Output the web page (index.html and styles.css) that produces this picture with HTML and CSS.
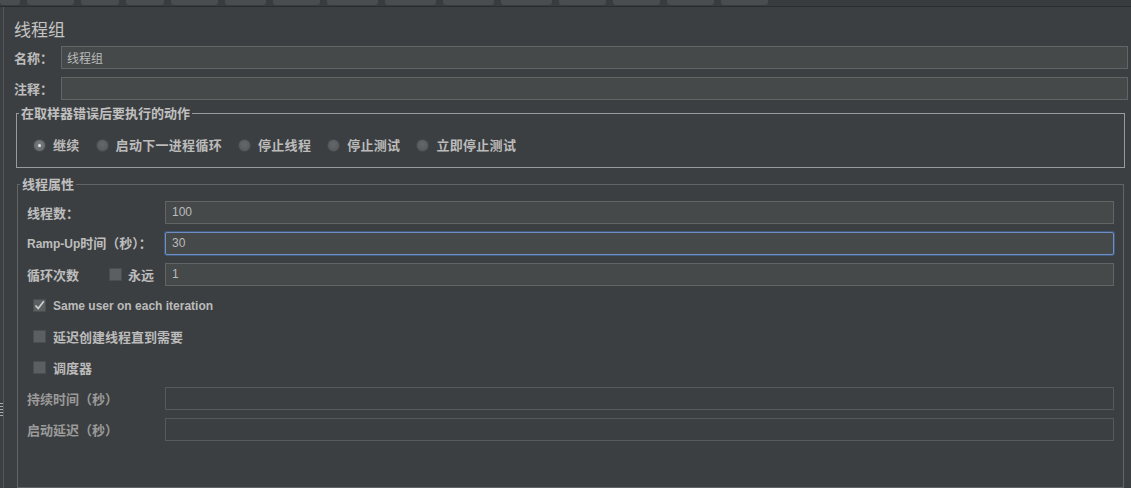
FILE: index.html
```html
<!DOCTYPE html>
<html lang="zh-CN">
<head>
<meta charset="utf-8">
<title>线程组</title>
<link rel="stylesheet" href="styles.css">
</head>
<body>
<div class="toolbar">
  <span class="tab t1"></span><span class="tab t2"></span><span class="tab t3"></span><span class="tab t3"></span><span class="tab t2"></span><span class="tab t4"></span><span class="tab t2"></span><span class="tab t5"></span><span class="tab t5"></span><span class="tab t5"></span><span class="tab t5"></span><span class="tab t2"></span><span class="tab t2"></span><span class="tab t2"></span><span class="tab t2"></span>
</div>
<div class="main">
  <div class="splitter"><div class="grip"></div></div>
  <div class="panel">
    <div class="title">线程组</div>
    <div class="fields">
      <span class="label">名称：</span><div class="input">线程组</div>
      <span class="label">注释：</span><div class="input"></div>
    </div>

    <fieldset class="group group-error">
      <legend>在取样器错误后要执行的动作</legend>
      <div class="radios">
        <span class="radio-item"><span class="radio checked"></span>继续</span>
        <span class="radio-item"><span class="radio"></span>启动下一进程循环</span>
        <span class="radio-item"><span class="radio"></span>停止线程</span>
        <span class="radio-item"><span class="radio"></span>停止测试</span>
        <span class="radio-item"><span class="radio"></span>立即停止测试</span>
      </div>
    </fieldset>

    <fieldset class="group group-thread">
      <legend>线程属性</legend>
      <div class="form">
        <span class="label">线程数：</span><div class="input num">100</div>
        <span class="label"><span class="en">Ramp-Up</span>时间（秒）：</span><div class="input num focused">30</div>
        <span class="label loop"><span>循环次数</span><span class="forever"><span class="checkbox"></span>永远</span></span><div class="input num">1</div>
        <div class="check-row"><span class="checkbox checked"><svg viewBox="0 0 13 13" width="13" height="13"><path d="M2.5 6.5 L5.2 9.5 L10.8 2.2" fill="none" stroke="#d0d0d0" stroke-width="1.7"/></svg></span><span class="en">Same user on each iteration</span></div>
        <div class="check-row"><span class="checkbox"></span>延迟创建线程直到需要</div>
        <div class="check-row"><span class="checkbox"></span>调度器</div>
        <span class="label disabled">持续时间（秒）</span><div class="input disabled-input"></div>
        <span class="label disabled">启动延迟（秒）</span><div class="input disabled-input"></div>
      </div>
    </fieldset>
  </div>
</div>
</body>
</html>
```
FILE: styles.css
```css
html, body {
  margin: 0;
  padding: 0;
  background: #3c3f41;
  height: 100%;
  overflow: hidden;
}
body {
  font-family: "Noto Sans CJK SC", "Liberation Sans", sans-serif;
  color: #bbbbbb;
  font-size: 13px;
}
.toolbar {
  display: flex;
  gap: 7px;
  height: 6px;
  border-bottom: 1px solid #2a2c2d;
  background: #393c3e;
}
.tab {
  height: 5px;
  background: #4a4d50;
  border-radius: 0 0 3px 3px;
}
.t1 { width: 20px; }
.t2 { width: 47px; }
.t3 { width: 38px; }
.t4 { width: 41px; }
.t5 { width: 51px; }

.main {
  display: flex;
  height: calc(100% - 7px);
}
.splitter {
  width: 3px;
  display: flex;
  flex-direction: column;
}
.grip {
  margin-top: 396px;
  height: 13px;
  width: 3px;
  background: repeating-linear-gradient(to bottom, #aaaaaa 0, #aaaaaa 1px, transparent 1px, transparent 3px);
}
.panel {
  flex: 1;
  border-left: 1px solid #545759;
  padding: 11px 3px 0 10px;
  display: flex;
  flex-direction: column;
}
.title {
  font-size: 17px;
  line-height: 22px;
  color: #c4c4c4;
}
.fields {
  margin-top: 6px;
  display: grid;
  grid-template-columns: 47px 1fr;
  grid-auto-rows: 23px;
  row-gap: 8px;
  align-items: center;
}
.label {
  font-weight: 700;
  line-height: 16px;
  white-space: nowrap;
  color: #bdbdbd;
}
.en {
  font-family: "Liberation Sans", sans-serif;
  font-size: 12px;
  font-weight: 700;
}
.input {
  box-sizing: border-box;
  height: 23px;
  background: #45494a;
  border: 1px solid #646464;
  padding: 0 5px;
  font-size: 12px;
  line-height: 21px;
  color: #bbbbbb;
}
.input.num {
  font-family: "Liberation Sans", sans-serif;
  padding-left: 6px;
}
.input.focused {
  border-color: #6f8fc4;
  border-radius: 2px;
  box-shadow: 0 0 0 1px #3f5a7e;
}
.input.disabled-input {
  background: #3c3f41;
  border-color: #575a5c;
}
.label.disabled {
  color: #9a9a9a;
}

.group {
  margin: 0;
  padding: 0;
  min-width: 0;
}
.group legend {
  margin-left: 2px;
  padding: 0 2px;
  font-weight: 700;
  line-height: 16px;
  color: #c0c0c0;
}
.group-error {
  margin: 5px 3px 0 2px;
  border: 1px solid #9a9a9a;
}
.radios {
  display: flex;
  align-items: center;
  height: 16px;
  padding: 16px 0 14px 16px;
}
.radio-item {
  display: flex;
  align-items: center;
  font-weight: 700;
  margin-right: 16px;
  line-height: 16px;
  letter-spacing: 0.3px;
}
.radio {
  box-sizing: border-box;
  width: 13px;
  height: 13px;
  border-radius: 50%;
  background: radial-gradient(circle at 50% 40%, #65686a, #535658);
  border: 1px solid #47494b;
  margin-right: 7px;
  display: flex;
  align-items: center;
  justify-content: center;
}
.radio.checked {
  background: radial-gradient(circle at 50% 45%, #7b7e80, #5f6264);
}
.radio.checked::after {
  content: "";
  width: 3px;
  height: 3px;
  border-radius: 50%;
  background: #e6e6e6;
}
.group-thread {
  margin: 8px 4px 0 3px;
  border: 1px solid #626567;
  flex: 1;
}
.form {
  padding: 9px 9px 0 9px;
  display: grid;
  grid-template-columns: 138px 1fr;
  grid-auto-rows: 23px;
  row-gap: 8px;
  align-items: center;
}
.loop {
  display: flex;
  align-items: center;
}
.forever {
  margin-left: auto;
  margin-right: 11px;
  display: flex;
  align-items: center;
}
.forever .checkbox {
  margin-right: 6px;
}
.check-row {
  grid-column: 1 / -1;
  display: flex;
  align-items: center;
  font-weight: 700;
  padding-left: 6px;
  line-height: 16px;
}
.check-row .checkbox {
  margin-right: 7px;
}
.checkbox {
  box-sizing: border-box;
  width: 13px;
  height: 13px;
  background: #5c5f61;
  border: 1px solid #4b4d4f;
  display: inline-flex;
}
.checkbox svg {
  display: block;
  margin: -1px;
}
```
